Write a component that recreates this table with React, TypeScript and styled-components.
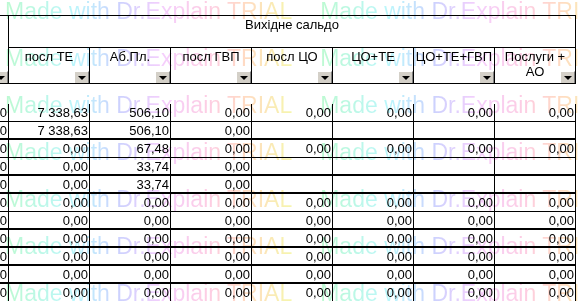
import React from 'react'
import styled, { createGlobalStyle } from 'styled-components'

const GlobalStyle = createGlobalStyle`
  html, body {
    margin: 0;
    padding: 0;
    background: #ffffff;
  }
  body {
    font-family: 'Liberation Sans', Arial, sans-serif;
    font-size: 13px;
    color: #000000;
  }
`

type Row = {
  left: string
  cells: Array<string>
  thick: boolean
}

const headers = [
  'посл ТЕ',
  'Аб.Пл.',
  'посл ГВП',
  'посл ЦО',
  'ЦО+ТЕ',
  'ЦО+ТЕ+ГВП',
  'Послуги + АО',
]

const zeros = ['0,00', '0,00', '0,00', '0,00', '0,00', '0,00', '0,00']

const rows: Array<Row> = [
  { left: '0,00', cells: ['7 338,63', '506,10', '0,00', '0,00', '0,00', '0,00', '0,00'], thick: false },
  { left: '0,00', cells: ['7 338,63', '506,10', '0,00', '', '', '', ''], thick: true },
  { left: '0,00', cells: ['0,00', '67,48', '0,00', '0,00', '0,00', '0,00', '0,00'], thick: false },
  { left: '0,00', cells: ['0,00', '33,74', '0,00', '', '', '', ''], thick: true },
  { left: '0,00', cells: ['0,00', '33,74', '0,00', '', '', '', ''], thick: true },
  { left: '0,00', cells: zeros, thick: false },
  { left: '0,00', cells: zeros, thick: true },
  { left: '0,00', cells: zeros, thick: true },
  { left: '0,00', cells: zeros, thick: true },
  { left: '0,00', cells: zeros, thick: true },
  { left: '0,00', cells: zeros, thick: false },
]

const watermarkRows = [0, 1, 2, 3, 4, 5, 6]

const App = () => {
  return (
    <>
      <GlobalStyle />
      <Page>
        <HeaderGrid>
          <CornerCell>
            <FilterButton />
          </CornerCell>
          <TitleCell>Вихідне сальдо</TitleCell>
          {headers.map((label, index) => (
            <HeadCell key={label} last={index === headers.length - 1}>
              {label}
              <FilterButton />
            </HeadCell>
          ))}
        </HeaderGrid>

        <Body>
          {rows.map((row, rowIndex) => (
            <DataRow key={rowIndex}>
              <LeftCell thick={row.thick}>{row.left}</LeftCell>
              {row.cells.map((value, index) => (
                <ValueCell
                  key={index}
                  thick={row.thick}
                  last={index === row.cells.length - 1}
                >
                  {value}
                </ValueCell>
              ))}
            </DataRow>
          ))}
        </Body>

        <Watermark>
          {watermarkRows.map(i => (
            <WatermarkRow key={i}>
              <WatermarkText>Made with Dr.Explain TRIAL</WatermarkText>
              <WatermarkText>Made with Dr.Explain TRIAL</WatermarkText>
            </WatermarkRow>
          ))}
        </Watermark>
      </Page>
    </>
  )
}

const Page = styled.div`
  position: relative;
  width: 579px;
  height: 301px;
  overflow: hidden;
  padding-top: 15px;
  box-sizing: border-box;
`

const HeaderGrid = styled.div`
  display: grid;
  grid-template-columns: 8px repeat(6, 81px) 82px;
  grid-template-rows: 32px 37px;
`

const CornerCell = styled.div`
  grid-column: 1;
  grid-row: 1 / span 2;
  position: relative;
  box-sizing: border-box;
  border-top: 1px solid #000;
  border-bottom: 1px solid #000;
  overflow: hidden;
`

const TitleCell = styled.div`
  grid-column: 2 / span 7;
  grid-row: 1;
  box-sizing: border-box;
  border: 1px solid #000;
  border-bottom: none;
  padding-top: 1px;
  line-height: 15px;
  text-align: center;
`

const HeadCell = styled.div<{ last: boolean }>`
  grid-row: 2;
  position: relative;
  box-sizing: border-box;
  border-top: 1px solid #000;
  border-bottom: 1px solid #000;
  border-left: 1px solid #000;
  border-right: ${props => (props.last ? '1px solid #000' : 'none')};
  padding: 1px 1px 0 1px;
  line-height: 15px;
  text-align: center;
  overflow: hidden;
`

const FilterButton = styled.span`
  position: absolute;
  right: 0;
  bottom: 0;
  width: 15px;
  height: 12px;
  box-sizing: border-box;
  background: #d4d0c8;
  border-top: 1px solid #ffffff;
  border-left: 1px solid #ffffff;
  border-right: 1px solid #808080;
  &::after {
    content: '';
    position: absolute;
    left: 3px;
    top: 4px;
    width: 0;
    height: 0;
    border-left: 4px solid transparent;
    border-right: 4px solid transparent;
    border-top: 4px solid #000000;
  }
`

const Body = styled.div`
  margin-top: 20px;
  display: flex;
  flex-direction: column;
`

const DataRow = styled.div`
  display: grid;
  grid-template-columns: 8px repeat(6, 81px) 82px;
  height: 18px;
`

const LeftCell = styled.div<{ thick: boolean }>`
  display: flex;
  justify-content: flex-end;
  align-items: flex-start;
  box-sizing: border-box;
  border-bottom: ${props => (props.thick ? '2px' : '1px')} solid #000;
  padding: 1px 1px 0 0;
  line-height: 15px;
  white-space: nowrap;
  overflow: hidden;
`

const ValueCell = styled.div<{ thick: boolean; last: boolean }>`
  display: flex;
  justify-content: flex-end;
  align-items: flex-start;
  box-sizing: border-box;
  border-left: 1px solid #000;
  border-right: ${props => (props.last ? '1px solid #000' : 'none')};
  border-bottom: ${props => (props.thick ? '2px' : '1px')} solid #000;
  padding: 1px 1px 0 0;
  line-height: 15px;
  white-space: nowrap;
  overflow: hidden;
`

const Watermark = styled.div`
  position: absolute;
  left: 0;
  top: 0;
  right: 0;
  bottom: 0;
  pointer-events: none;
  mix-blend-mode: multiply;
  display: flex;
  flex-direction: column;
  gap: 24px;
`

const WatermarkRow = styled.div`
  display: flex;
  height: 23px;
  padding-left: 5px;
  white-space: nowrap;
`

const WatermarkText = styled.span`
  display: inline-block;
  flex: 0 0 auto;
  margin-right: 28px;
  font-family: 'Liberation Sans', Arial, sans-serif;
  font-size: 23px;
  line-height: 23px;
  color: transparent;
  background: linear-gradient(
    90deg,
    hsl(140, 85%, 86%) 0%,
    hsl(185, 90%, 86%) 24%,
    hsl(235, 95%, 90%) 40%,
    hsl(290, 90%, 90%) 55%,
    hsl(335, 95%, 90%) 72%,
    hsl(25, 100%, 88%) 84%,
    hsl(60, 80%, 82%) 100%
  );
  -webkit-background-clip: text;
  background-clip: text;
`

export default App
